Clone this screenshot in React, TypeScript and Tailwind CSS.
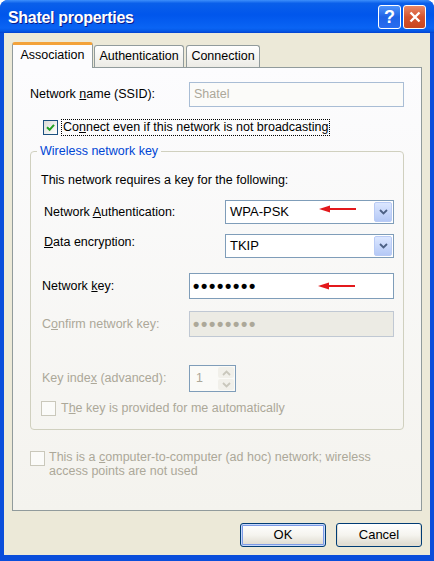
import React from 'react'

// XP style "Shatel properties" wireless dialog

function Chevron({ up }: { up?: boolean }) {
  return (
    <svg viewBox="0 0 9 6" className="h-[6px] w-[9px]">
      <path
        d={up ? 'M1 5 L4.5 1.5 L8 5' : 'M1 1 L4.5 4.5 L8 1'}
        fill="none"
        stroke="currentColor"
        strokeWidth="1.8"
      />
    </svg>
  )
}

function RedArrow({ className }: { className: string }) {
  return (
    <svg viewBox="0 0 38 8" className={`absolute h-[8px] w-[38px] ${className}`}>
      <path d="M9 4 H37" stroke="#e3191c" strokeWidth="2" />
      <path d="M0 4 L11 0.6 L11 7.4 Z" fill="#e3191c" />
    </svg>
  )
}

function Checkbox({ checked, disabled }: { checked?: boolean; disabled?: boolean }) {
  return (
    <span
      className={`flex h-[15px] w-[15px] shrink-0 items-center justify-center border ${
        disabled
          ? 'border-[#cac8bb] bg-[#fbfbf9]'
          : 'border-[#1c5180] bg-gradient-to-br from-[#dcdcd7] to-white'
      }`}
    >
      {checked && (
        <svg viewBox="0 0 9 9" className="h-[9px] w-[9px]">
          <path d="M1 4.2 L3.6 6.8 L8 1.8" fill="none" stroke="#21a121" strokeWidth="2" />
        </svg>
      )}
    </span>
  )
}

function Select({ value, arrow }: { value: string; arrow?: boolean }) {
  return (
    <div className="relative flex h-[24px] w-[169px] items-center border border-[#7f9db9] bg-white pl-[4px] pr-[1px]">
      <span className="flex-1 text-[13px]">{value}</span>
      <div className="flex h-[20px] w-[18px] items-center justify-center rounded-[2px] border border-[#b9cbf5] bg-gradient-to-b from-[#dce7ff] to-[#b5c9f6] text-[#4d6185]">
        <Chevron />
      </div>
      {arrow && <RedArrow className="left-[93px] top-[4px]" />}
    </div>
  )
}

function TitleButton({ kind }: { kind: 'help' | 'close' }) {
  if (kind === 'help') {
    return (
      <div className="flex h-[24px] w-[23px] items-center justify-center rounded-[3px] border border-white bg-gradient-to-b from-[#4f94fb] via-[#1f63e6] to-[#2a6df0] text-[18px] leading-none font-bold text-white">
        ?
      </div>
    )
  }
  return (
    <div className="flex h-[24px] w-[23px] items-center justify-center rounded-[3px] border border-white bg-gradient-to-b from-[#e98866] via-[#d5532e] to-[#c94620]">
      <svg viewBox="0 0 12 12" className="h-[12px] w-[12px]">
        <path d="M1.5 1.5 L10.5 10.5 M10.5 1.5 L1.5 10.5" stroke="white" strokeWidth="2.4" />
      </svg>
    </div>
  )
}

function Button({ label, primary }: { label: string; primary?: boolean }) {
  return (
    <div
      className={`flex h-[24px] w-[86px] items-center justify-center rounded-[3px] border border-[#003c74] bg-gradient-to-b from-white via-[#f5f4ef] to-[#dcd8cc] text-[13px] ${
        primary
          ? 'shadow-[inset_0_0_0_1px_#c6d8fb,inset_0_0_0_2px_#7d9be6]'
          : 'shadow-[inset_0_-1px_0_1px_#e2ded3]'
      }`}
    >
      {label}
    </div>
  )
}

export default function App() {
  return (
    <div className="h-[561px] w-[434px] bg-white font-['Liberation_Sans',Arial,sans-serif] text-[12.5px] text-black">
      <div className="flex h-full flex-col overflow-hidden rounded-t-[8px] bg-[#0a4edb]">
        {/* title bar */}
        <div className="flex h-[33px] shrink-0 items-center bg-[linear-gradient(to_bottom,#3d8ffb_0%,#0a5fea_10%,#0056ec_45%,#0a64f4_85%,#0458e6_94%,#0341cf_100%)] pl-[8px] pr-[8px]">
          <span className="pt-[2px] text-[16px] font-bold tracking-[-0.3px] text-white [text-shadow:1px_1px_#0a1a8a]">
            Shatel properties
          </span>
          <div className="ml-auto flex gap-[2px]">
            <TitleButton kind="help" />
            <TitleButton kind="close" />
          </div>
        </div>

        {/* dialog body */}
        <div className="mx-[4px] mb-[6px] flex flex-1 flex-col bg-[#ece9d8] px-[8px] pt-[9px] pb-[8px]">
          {/* tabs */}
          <div className="flex h-[25px] items-end">
            <div className="relative z-10 -mb-[1px] flex h-[26px] w-[81px] items-center justify-center rounded-t-[3px] border-x border-t-[3px] border-x-[#919b9c] border-t-[#f3a23a] bg-[#fcfcfe] pb-[2px] text-[12.5px]">
              Association
            </div>
            <div className="ml-[1px] flex h-[22px] w-[90px] items-center justify-center rounded-t-[3px] border border-b-0 border-[#919b9c] bg-gradient-to-b from-white to-[#ecebe5] text-[12.5px]">
              Authentication
            </div>
            <div className="ml-[2px] flex h-[22px] w-[74px] items-center justify-center rounded-t-[3px] border border-b-0 border-[#919b9c] bg-gradient-to-b from-white to-[#ecebe5] text-[12.5px]">
              Connection
            </div>
          </div>

          {/* tab panel */}
          <div className="h-[444px] border border-[#919b9c] bg-gradient-to-b from-[#fcfcfe] to-[#f4f3ee] px-[17px]">
            <div className="mt-[14px] flex h-[25px] items-center justify-between">
              <span>
                Network <u>n</u>ame (SSID):
              </span>
              <div className="flex h-[25px] w-[215px] items-center border border-[#a9bdd5] bg-[#fbfbf9] pl-[4px] text-[#aca899]">
                Shatel
              </div>
            </div>

            <div className="mt-[12px] flex h-[17px] items-center pl-[13px]">
              <Checkbox checked />
              <span className="ml-[3px] border border-dotted border-black px-[1px] leading-[15px]">
                Co<u>n</u>nect even if this network is not broadcasting
              </span>
            </div>

            <fieldset className="mt-[8px] h-[286px] rounded-[4px] border border-[#d0d0bf] pr-[9px] pl-[10px]">
              <legend className="-ml-[4px] px-[3px] leading-[15px] text-[#0046d5]">Wireless network key</legend>

              <div className="mt-[13px] leading-[16px]">This network requires a key for the following:</div>

              <div className="mt-[12px] flex h-[24px] items-center justify-between pl-[3px]">
                <span>
                  Network <u>A</u>uthentication:
                </span>
                <Select value="WPA-PSK" arrow />
              </div>

              <div className="mt-[10px] flex h-[24px] justify-between pl-[3px]">
                <span className="leading-[16px]">
                  <u>D</u>ata encryption:
                </span>
                <Select value="TKIP" />
              </div>

              <div className="mt-[15px] flex h-[26px] items-center pl-[1px]">
                <span className="w-[147px]">
                  Network <u>k</u>ey:
                </span>
                <div className="relative flex h-[26px] w-[205px] items-center border border-[#7f9db9] bg-white pl-[3px] text-[18px] leading-none font-bold tracking-[1.7px]">
                  ••••••••
                  <RedArrow className="left-[128px] top-[8px]" />
                </div>
              </div>

              <div className="mt-[12px] flex h-[26px] items-center pl-[1px] text-[#aca899]">
                <span className="w-[147px]">
                  C<u>o</u>nfirm network key:
                </span>
                <div className="flex h-[26px] w-[205px] items-center border border-[#c0c8d3] bg-[#ecebe4] pl-[3px] text-[18px] leading-none font-bold tracking-[1.7px]">
                  ••••••••
                </div>
              </div>

              <div className="mt-[28px] flex h-[27px] items-center pl-[1px] text-[#aca899]">
                <span className="w-[147px]">
                  Key inde<u>x</u> (advanced):
                </span>
                <div className="flex h-[27px] w-[47px] border border-[#7f9db9] bg-[#fafaf7]">
                  <span className="flex flex-1 items-center pl-[6px]">1</span>
                  <div className="my-[1px] mr-[1px] flex w-[16px] flex-col gap-[1px] text-[#c9c7bc]">
                    <div className="flex flex-1 items-center justify-center rounded-[2px] bg-[#f1f0ea]">
                      <Chevron up />
                    </div>
                    <div className="flex flex-1 items-center justify-center rounded-[2px] bg-[#f1f0ea]">
                      <Chevron />
                    </div>
                  </div>
                </div>
              </div>

              <div className="mt-[8px] flex h-[17px] items-center text-[#aca899]">
                <Checkbox disabled />
                <span className="ml-[5px]">
                  T<u>h</u>e key is provided for me automatically
                </span>
              </div>
            </fieldset>

            <div className="mt-[20px] flex items-start text-[#aca899]">
              <span className="mt-[1px]">
                <Checkbox disabled />
              </span>
              <span className="ml-[4px] leading-[14px]">
                This is a <u>c</u>omputer-to-computer (ad hoc) network; wireless
                <br />
                access points are not used
              </span>
            </div>
          </div>

          {/* buttons */}
          <div className="mt-[12px] flex justify-end gap-[10px]">
            <Button label="OK" primary />
            <Button label="Cancel" />
          </div>
        </div>
      </div>
    </div>
  )
}
